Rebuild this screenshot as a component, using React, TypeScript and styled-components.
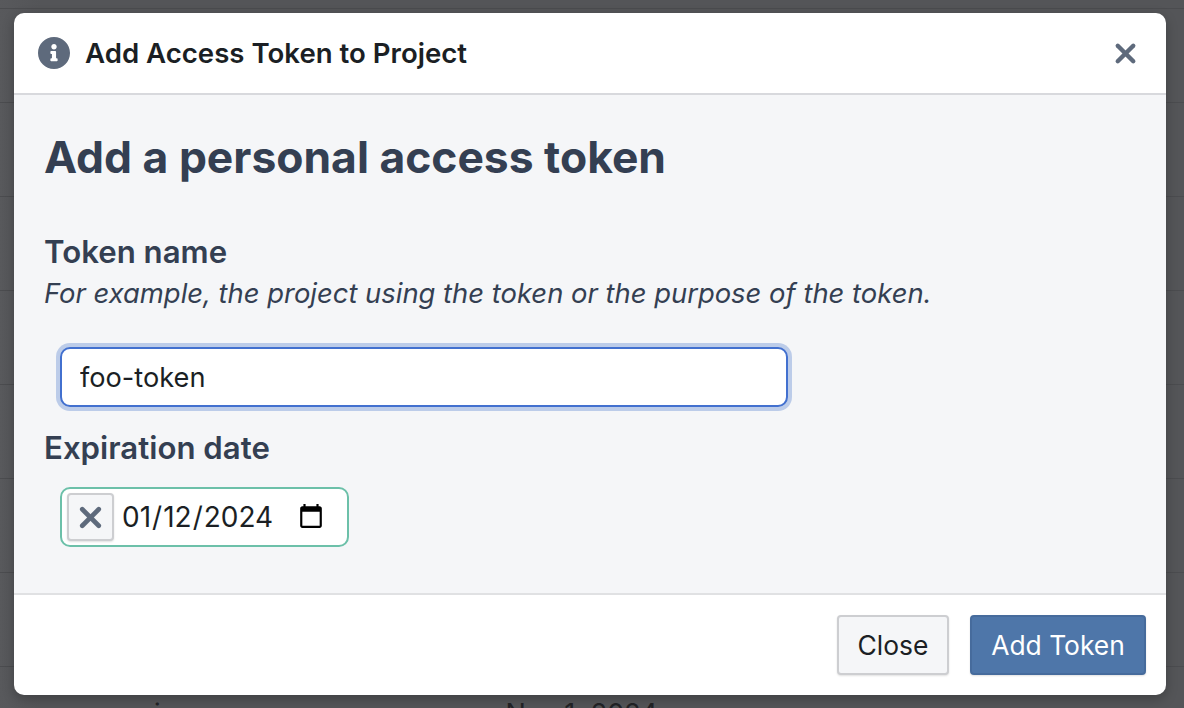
import React from 'react';
import styled, { createGlobalStyle } from 'styled-components';
import { X } from 'lucide-react';

const GlobalStyle = createGlobalStyle`
	html, body {
		margin: 0;
		padding: 0;
		height: 100%;
		overflow: hidden;
		background: #545558;
		font-family: Inter, "Liberation Sans", sans-serif;
	}
`;

const Backdrop = styled.div`
	height: 708px;
	overflow: hidden;
	padding-top: 8px;
	box-sizing: border-box;
	background: linear-gradient(90deg, #58595c, #545558 40px);
`;

const BackRow = styled.div`
	height: 94px;
	box-sizing: border-box;
	border-top: 1px solid #4b4c4f;
	display: flex;
	color: #222326;
	font-size: 27px;
	padding-top: 30px;
`;

const BackCell = styled.span<{ $left: number }>`
	margin-left: ${props => props.$left}px;
`;

const Modal = styled.div`
	position: absolute;
	left: 14px;
	top: 13px;
	width: 1152px;
	height: 682px;
	display: flex;
	flex-direction: column;
	background: #fff;
	border-radius: 10px;
	overflow: hidden;
	box-shadow: 0 4px 12px rgba(0, 0, 0, .25);
`;

const Header = styled.header`
	height: 82px;
	flex: none;
	box-sizing: border-box;
	display: flex;
	align-items: center;
	padding: 0 25px 0 24px;
	border-bottom: 2px solid #d8d9dd;
`;

const Title = styled.h5`
	flex: 1;
	margin: 0 0 0 15px;
	font-size: 27.6px;
	font-weight: 600;
	color: #1b1f24;
`;

const CloseIcon = styled(X)`
	color: #5e6a7c;
	display: block;
`;

const Body = styled.main`
	flex: 1;
	background: #f5f6f8;
	padding: 31px 30px 0;
	color: #343f52;
`;

const Heading = styled.h2`
	margin: 0 0 45px;
	font-size: 44.4px;
	line-height: 62px;
	font-weight: 700;
`;

const FieldLabel = styled.div`
	font-size: 31.2px;
	line-height: 38px;
	font-weight: 600;
`;

const Hint = styled.div`
	font-size: 27.4px;
	line-height: 44px;
	font-style: italic;
	margin-bottom: 32px;
`;

const NameInput = styled.input`
	display: block;
	box-sizing: border-box;
	width: 728px;
	height: 60px;
	margin: 0 0 22px 16px;
	padding: 0 18px;
	border: 2px solid #4270cf;
	border-radius: 10px;
	outline: none;
	box-shadow: 0 0 0 4px #bccce9;
	font: 400 27.2px Inter, sans-serif;
	color: #1b1f24;
	background: #fff;
`;

const DateBox = styled.div`
	display: flex;
	align-items: center;
	box-sizing: border-box;
	width: 289px;
	height: 60px;
	margin: 20px 0 0 16px;
	padding: 0 5px;
	border: 2px solid #6cc0a9;
	border-radius: 10px;
	background: #fff;
`;

const ClearButton = styled.button`
	display: flex;
	align-items: center;
	justify-content: center;
	flex: none;
	width: 47px;
	height: 48px;
	padding: 0;
	background: #f5f6f8;
	border: 2px solid #cdced1;
	border-radius: 4px;
	box-shadow: 0 1px 2px rgba(0, 0, 0, .12);
	color: #5e6a7c;
`;

const DateInput = styled.input`
	flex: 1;
	min-width: 0;
	margin: 0 15px 0 7px;
	padding: 0;
	border: 0;
	outline: none;
	background: transparent;
	font: 400 28px Inter, sans-serif;
	color: #1b1f24;
`;

const Footer = styled.footer`
	height: 102px;
	flex: none;
	box-sizing: border-box;
	display: flex;
	justify-content: flex-end;
	align-items: flex-start;
	gap: 21px;
	padding: 20px 20px 0;
	border-top: 2px solid #e0e1e3;
`;

const Button = styled.button<{ $primary?: boolean }>`
	width: ${props => props.$primary ? 176 : 112}px;
	height: 60px;
	box-sizing: border-box;
	padding: 0;
	font: 400 26.4px Inter, sans-serif;
	border-radius: 4px;
	color: ${props => props.$primary ? '#fff' : '#1b1f24'};
	background: ${props => props.$primary ? '#4e76a9' : '#f5f6f8'};
	border: 2px solid ${props => props.$primary ? '#466b9c' : '#cdced1'};
	box-shadow: 0 1px 2px rgba(0, 0, 0, .12);
`;

const rows = [0, 1, 2, 3, 4, 5, 6, 7];

const App: React.FC = () => {
	return <>
		<GlobalStyle />
		<Backdrop>
			{rows.map(i => <BackRow key={i}>
				{i === 7 && <><BackCell $left={154}>i</BackCell><BackCell $left={345}>Nov 1, 2024</BackCell></>}
			</BackRow>)}
		</Backdrop>
		<Modal>
			<Header>
				<svg width="32" height="32" viewBox="8 8 496 496" fill="#5e6a7c">
					<path d="M256 8C119 8 8 119 8 256s111 248 248 248 248-111 248-248S393 8 256 8zm0 110c23.200 0 42 18.800 42 42s-18.800 42-42 42-42-18.800-42-42 18.800-42 42-42zm56 254c0 6.600-5.400 12-12 12h-88c-6.600 0-12-5.400-12-12v-24c0-6.600 5.400-12 12-12h12v-64h-12c-6.600 0-12-5.400-12-12v-24c0-6.600 5.400-12 12-12h64c6.600 0 12 5.400 12 12v100h12c6.600 0 12 5.400 12 12v24z" />
				</svg>
				<Title>Add Access Token to Project</Title>
				<CloseIcon size={31} strokeWidth={3.4} />
			</Header>
			<Body>
				<Heading>Add a personal access token</Heading>
				<FieldLabel>Token name</FieldLabel>
				<Hint>For example, the project using the token or the purpose of the token.</Hint>
				<NameInput type="text" defaultValue="foo-token" />
				<FieldLabel>Expiration date</FieldLabel>
				<DateBox>
					<ClearButton type="button"><X size={33} strokeWidth={3.4} /></ClearButton>
					<DateInput type="date" defaultValue="2024-01-12" />
				</DateBox>
			</Body>
			<Footer>
				<Button type="button">Close</Button>
				<Button type="button" $primary>Add Token</Button>
			</Footer>
		</Modal>
	</>;
};

export default App;
